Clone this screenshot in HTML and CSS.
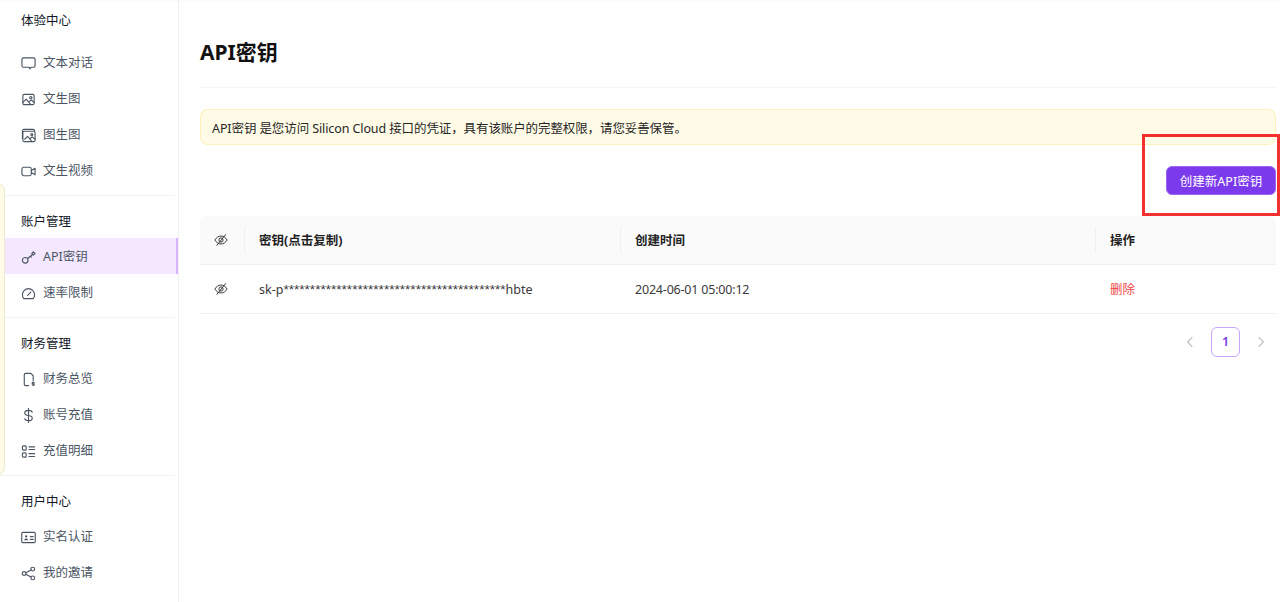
FILE: index.html
```html
<!DOCTYPE html>
<html lang="zh-CN">
<head>
<meta charset="utf-8">
<title>API密钥</title>
<link rel="stylesheet" href="styles.css">
</head>
<body>
<div class="app">
  <aside class="sidebar">
    <section class="group">
      <h3 class="group-title first">体验中心</h3>
      <a class="item"><svg class="ico" viewBox="0 0 16 16"><path d="M2.500 2h11A1.500 1.500 0 0 1 15 3.500v7a1.500 1.500 0 0 1-1.500 1.500H11l-1.500 1.800L9 12H2.500A1.500 1.500 0 0 1 1 10.500v-7A1.500 1.500 0 0 1 2.500 2z"/></svg>文本对话</a>
      <a class="item"><svg class="ico" viewBox="0 0 16 16"><rect x="2" y="2.500" width="12" height="11" rx="1.500"/><circle cx="10.500" cy="6" r="1.200"/><path d="M2 11l3.500-3.500L10 13M9 10l2-1.500 3 2.500"/></svg>文生图</a>
      <a class="item"><svg class="ico" viewBox="0 0 16 16"><path d="M1.500 11V3A1.500 1.500 0 0 1 3 1.500h10A1.500 1.500 0 0 1 14.500 3"/><rect x="2" y="3.500" width="13" height="11" rx="1.500"/><circle cx="11.500" cy="7" r="1.100"/><path d="M4 12l3-3 4 4.500M10 11l2-1.500 3 2.500"/></svg>图生图</a>
      <a class="item"><svg class="ico" viewBox="0 0 16 16"><rect x="1" y="3.500" width="10" height="9" rx="2"/><path d="M11 7l4-2.500v7L11 9"/></svg>文生视频</a>
    </section>
    <section class="group">
      <h3 class="group-title">账户管理</h3>
      <a class="item active"><svg class="ico" viewBox="0 0 16 16"><circle cx="4.500" cy="11" r="3"/><path d="M7 9l5-4M10 6.500l1 1.200"/><rect x="12" y="2.500" width="2.400" height="2.400" transform="rotate(45 13.200 3.700)"/></svg>API密钥</a>
      <a class="item"><svg class="ico" viewBox="0 0 16 16"><path d="M3 13.500A6.500 6.500 0 1 1 13 13.500z"/><path d="M7 10l3.500-3.500"/></svg>速率限制</a>
    </section>
    <section class="group">
      <h3 class="group-title">财务管理</h3>
      <a class="item"><svg class="ico" viewBox="0 0 16 16"><path d="M8 14.500H5A1.500 1.500 0 0 1 3.500 13V3A1.500 1.500 0 0 1 5 1.500h5.500L13 4v5"/><path d="M14 11h-2v1.500h2V14h-2"/></svg>财务总览</a>
      <a class="item"><svg class="ico" viewBox="0 0 16 16"><path d="M12 4.500C11.500 3 10 2.500 8 2.500c-2.200 0-4 1-4 2.800S5.800 7.700 8 8s4 1 4 2.800-1.800 2.700-4 2.700c-2 0-3.500-.6-4-2M8 .5v15"/></svg>账号充值</a>
      <a class="item"><svg class="ico" viewBox="0 0 16 16"><rect x="1.500" y="2" width="4" height="4.500" rx="1"/><rect x="1.500" y="9.500" width="4" height="4.500" rx="1"/><path d="M8.500 3h6M8.500 5.800h6M8.500 10.300h6M8.500 13.300h6"/></svg>充值明细</a>
    </section>
    <section class="group last">
      <h3 class="group-title">用户中心</h3>
      <a class="item"><svg class="ico" viewBox="0 0 16 16"><rect x=".8" y="2.500" width="14.400" height="11" rx="1.200"/><circle cx="5.500" cy="6.800" r="1.200" class="solid"/><path d="M3.300 11c.3-1.500 1.200-2 2.200-2s1.900.5 2.200 2z" class="solid"/><path d="M10 7h3M10 10h3"/></svg>实名认证</a>
      <a class="item"><svg class="ico" viewBox="0 0 16 16"><circle cx="3.300" cy="8" r="2"/><circle cx="12.500" cy="3.300" r="2"/><circle cx="12.500" cy="12.700" r="2"/><path d="M5.100 7.100l5.600-2.900M5.100 8.900l5.600 2.900"/></svg>我的邀请</a>
    </section>
  </aside>

  <main class="main">
    <h1 class="title">API密钥</h1>
    <div class="alert">API密钥 是您访问 Silicon Cloud 接口的凭证，具有该账户的完整权限，请您妥善保管。</div>
    <div class="actions"><button class="btn-primary">创建新API密钥</button></div>
    <div class="table">
      <div class="row head">
        <div class="cell eye"><svg class="eye-ico" viewBox="0 0 16 16"><path d="M1 8c1.800-3 4.200-4.500 7-4.500S13.200 5 15 8c-1.800 3-4.200 4.500-7 4.500S2.800 11 1 8z"/><circle cx="8" cy="8" r="2.400"/><path d="M3 14.500L13.500 1.500"/></svg></div>
        <div class="cell label">密钥(点击复制)</div>
        <div class="cell label">创建时间</div>
        <div class="cell label">操作</div>
      </div>
      <div class="row">
        <div class="cell eye"><svg class="eye-ico" viewBox="0 0 16 16"><path d="M1 8c1.800-3 4.200-4.500 7-4.500S13.200 5 15 8c-1.800 3-4.200 4.500-7 4.500S2.800 11 1 8z"/><circle cx="8" cy="8" r="2.400"/><path d="M3 14.500L13.500 1.500"/></svg></div>
        <div class="cell label">sk-p<span class="stars">******************************************</span>hbte</div>
        <div class="cell label date">2024-06-01 05:00:12</div>
        <div class="cell label danger">删除</div>
      </div>
    </div>
    <nav class="pager">
      <span class="arrow"><svg viewBox="0 0 10 10"><path d="M7 1L3 5l4 4"/></svg></span>
      <span class="page">1</span>
      <span class="arrow"><svg viewBox="0 0 10 10"><path d="M3 1l4 4-4 4"/></svg></span>
    </nav>
  </main>
</div>
<div class="edge-panel"></div>
<div class="annotation"></div>
</body>
</html>
```

FILE: styles.css
```css
* { box-sizing: border-box; }
html, body { margin: 0; height: 100%; overflow: hidden; }
body {
  background: #fff;
  color: #1f1f1f;
  font-family: "Noto Sans", "Noto Sans CJK SC", sans-serif;
  font-size: 12.500px;
  line-height: 22px;
}
.app {
  display: flex;
  height: 602px;
  box-shadow: inset 0 3px 3px -2px rgba(0, 0, 0, .03);
}

.sidebar {
  width: 179px;
  flex: none;
  border-right: 1px solid #f0f0f0;
  padding-top: 9px;
}
.group { margin-bottom: 14px; }
.group::after {
  content: "";
  display: block;
  height: 1px;
  margin: 7px 3px 0 0;
  background: #f3f3f3;
}
.group.last { margin-bottom: 0; }
.group.last::after { display: none; }
.group-title {
  margin: 0 0 5px;
  padding: 1px 0 0 21px;
  font-size: 12.500px;
  font-weight: 400;
  line-height: 22px;
  color: #111827;
}
.group-title.first { margin-bottom: 12px; }
.item {
  display: flex;
  align-items: center;
  gap: 7px;
  height: 36px;
  padding: 2px 0 0 21px;
  color: #4b5563;
}
.item.active {
  background: #f3e8ff;
  box-shadow: inset -2px 0 0 #d8b4fe;
}
.ico {
  width: 15px;
  height: 15px;
  flex: none;
  fill: none;
  stroke: #4b5563;
  stroke-width: 1.200;
  stroke-linecap: round;
  stroke-linejoin: round;
}
.ico .solid { fill: #4b5563; stroke: none; }

.main { flex: 1; padding: 0 4px 0 21px; min-width: 0; }
.title {
  margin: 0;
  height: 88px;
  padding-top: 36px;
  border-bottom: 1px solid #f5f5f5;
  font-size: 21px;
  font-weight: 700;
  line-height: 33px;
  color: #111;
}
.alert {
  margin-top: 21px;
  height: 36px;
  padding: 3px 11px 0;
  display: flex;
  align-items: center;
  background: #fffbe6;
  border: 1px solid #ffe58f80;
  border-radius: 8px;
  color: #262626;
  letter-spacing: -0.1px;
  white-space: pre;
}
.actions { display: flex; justify-content: flex-end; margin-top: 21px; }
.btn-primary {
  width: 110px;
  height: 29px;
  padding: 2px 0 0;
  background: #7c3aed;
  border: 1px solid #9a66f1;
  border-radius: 6px;
  color: #fff;
  font: inherit;
}
.table { margin-top: 21px; }
.row {
  display: grid;
  grid-template-columns: 44px 376px 475px 1fr;
  height: 49px;
  border-bottom: 1px solid #f0f0f0;
  align-items: center;
  color: #3a3a3a;
}
.row.head {
  background: #fafafa;
  border-radius: 8px 8px 0 0;
  font-weight: 700;
  color: #1f1f1f;
}
.cell {
  padding-left: 15px;
  position: relative;
  white-space: nowrap;
}
.cell.label { line-height: 24px; padding-top: 2px; }
.head .cell + .cell::before {
  content: "";
  position: absolute;
  left: 0;
  top: 0;
  bottom: 0;
  width: 1px;
  background: #f0f0f0;
}
.cell.eye { display: flex; padding-left: 14px; }
.eye-ico {
  width: 14px;
  height: 14px;
  fill: none;
  stroke: #333;
  stroke-width: 1.100;
}
.stars { font-family: "Liberation Sans", sans-serif; font-size: 13.600px; }
.date { letter-spacing: -0.2px; }
.danger { color: #ef4444; }
.pager {
  display: flex;
  justify-content: flex-end;
  align-items: center;
  margin-top: 13px;
  gap: 6px;
}
.arrow {
  width: 30px;
  height: 30px;
  display: flex;
  align-items: center;
  justify-content: center;
}
.arrow svg { width: 12px; height: 12px; fill: none; stroke: #bfbfbf; stroke-width: 1; }
.page {
  width: 29px;
  height: 30px;
  border: 1px solid #c4a5f9;
  border-radius: 6px;
  color: #7c3aed;
  font-weight: 600;
  display: flex;
  align-items: center;
  justify-content: center;
}
.edge-panel {
  position: absolute;
  left: -10px;
  top: 183px;
  width: 15px;
  height: 292px;
  background: #fffbe6;
  border: 1px solid #ece8d2;
  border-radius: 8px;
}
.annotation {
  position: absolute;
  left: 1142px;
  top: 134px;
  width: 138px;
  height: 82px;
  border: 3px solid #f23030;
}
```
